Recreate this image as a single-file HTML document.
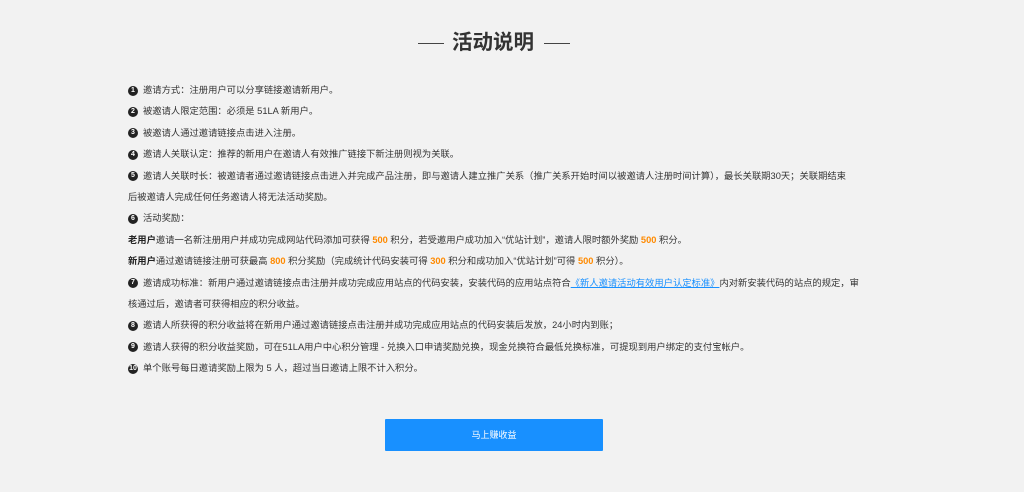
<!DOCTYPE html>
<html><head><meta charset="utf-8"><style>
html,body{margin:0;padding:0;background:#f2f2f2;width:1024px;height:492px;overflow:hidden;font-family:"Liberation Sans","Noto Sans CJK SC",sans-serif;color:#333}
.title{position:absolute;top:29px;left:452px;font-size:20.5px;font-weight:bold;color:#333;line-height:28px;white-space:nowrap}
.ln{position:absolute;top:43px;height:1px;width:26px;background:#444}
.list{position:absolute;left:128px;top:80px;width:760px;font-size:9.3px;line-height:21.4px;color:#333}
.list div{white-space:nowrap;height:21.4px;position:relative}
.n{display:inline-block;width:10px;height:10px;border-radius:50%;background:#222;color:#fff;font-size:7px;line-height:10px;text-align:center;font-weight:bold;margin-right:5px;vertical-align:middle;position:relative;top:0px}
.o{color:#ff8a00;font-weight:bold}
b{color:#222}
a{color:#1890ff;text-decoration:underline}
.btn{position:absolute;left:385px;top:419px;width:218px;height:32px;background:#1890ff;color:#fff;font-size:9px;line-height:32px;text-align:center;border-radius:1px}
</style></head><body>
<div class="ln" style="left:418px"></div><div class="ln" style="left:544px"></div>
<div class="title">活动说明</div>
<div class="list">
<div><span class="n">1</span>邀请方式：注册用户可以分享链接邀请新用户。</div>
<div><span class="n">2</span>被邀请人限定范围：必须是 51LA 新用户。</div>
<div><span class="n">3</span>被邀请人通过邀请链接点击进入注册。</div>
<div><span class="n">4</span>邀请人关联认定：推荐的新用户在邀请人有效推广链接下新注册则视为关联。</div>
<div><span class="n">5</span>邀请人关联时长：被邀请者通过邀请链接点击进入并完成产品注册，即与邀请人建立推广关系（推广关系开始时间以被邀请人注册时间计算），最长关联期30天；关联期结束</div>
<div>后被邀请人完成任何任务邀请人将无法活动奖励。</div>
<div><span class="n">6</span>活动奖励：</div>
<div><b>老用户</b>邀请一名新注册用户并成功完成网站代码添加可获得 <span class="o">500</span> 积分，若受邀用户成功加入“优站计划”，邀请人限时额外奖励 <span class="o">500</span> 积分。</div>
<div><b>新用户</b>通过邀请链接注册可获最高 <span class="o">800</span> 积分奖励（完成统计代码安装可得 <span class="o">300</span> 积分和成功加入“优站计划”可得 <span class="o">500</span> 积分）。</div>
<div><span class="n">7</span>邀请成功标准：新用户通过邀请链接点击注册并成功完成应用站点的代码安装，安装代码的应用站点符合<a>《新人邀请活动有效用户认定标准》</a>内对新安装代码的站点的规定，审</div>
<div>核通过后，邀请者可获得相应的积分收益。</div>
<div><span class="n">8</span>邀请人所获得的积分收益将在新用户通过邀请链接点击注册并成功完成应用站点的代码安装后发放，24小时内到账；</div>
<div><span class="n">9</span>邀请人获得的积分收益奖励，可在51LA用户中心积分管理 - 兑换入口申请奖励兑换，现金兑换符合最低兑换标准，可提现到用户绑定的支付宝帐户。</div>
<div><span class="n">10</span>单个账号每日邀请奖励上限为 5 人，超过当日邀请上限不计入积分。</div>
</div>
<div class="btn">马上赚收益</div>
</body></html>
